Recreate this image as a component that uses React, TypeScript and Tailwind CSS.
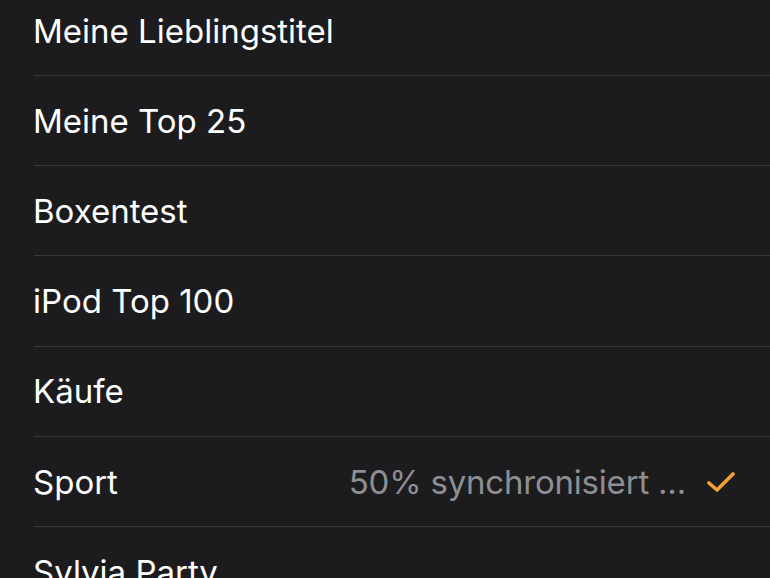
import React from "react";

const rows: { title: string; detail?: string; check?: boolean }[] = [
  { title: "Meine Lieblingstitel" },
  { title: "Meine Top 25" },
  { title: "Boxentest" },
  { title: "iPod Top 100" },
  { title: "Käufe" },
  { title: "Sport", detail: "50% synchronisiert ...", check: true },
  { title: "Sylvia Party" },
];

export default function App() {
  return (
    <div
      className="w-[770px] h-[578px] overflow-hidden bg-[#1c1c1e]"
      style={{ fontFamily: "Inter, 'Liberation Sans', sans-serif" }}
    >
      <div className="mt-[-14.2px] pl-[34px]">
        {rows.map((r) => (
          <div
            key={r.title}
            className="h-[90.2px] border-b border-[#38383a] flex items-center pt-[2px] pr-[35px]"
          >
            <span className="text-[33px] text-white flex-1 -ml-[1px]">{r.title}</span>
            {r.detail && (
              <span className="text-[33px] text-[#8e8e93] tracking-[-0.2px] mr-[21px]">{r.detail}</span>
            )}
            {r.check && (
              <svg width="28" height="22" viewBox="0 0 28 22" fill="none">
                <path
                  d="M2 12 L10 19 L26 3"
                  stroke="#f5a030"
                  strokeWidth="3.6"
                  strokeLinecap="round"
                  strokeLinejoin="round"
                />
              </svg>
            )}
          </div>
        ))}
      </div>
    </div>
  );
}
